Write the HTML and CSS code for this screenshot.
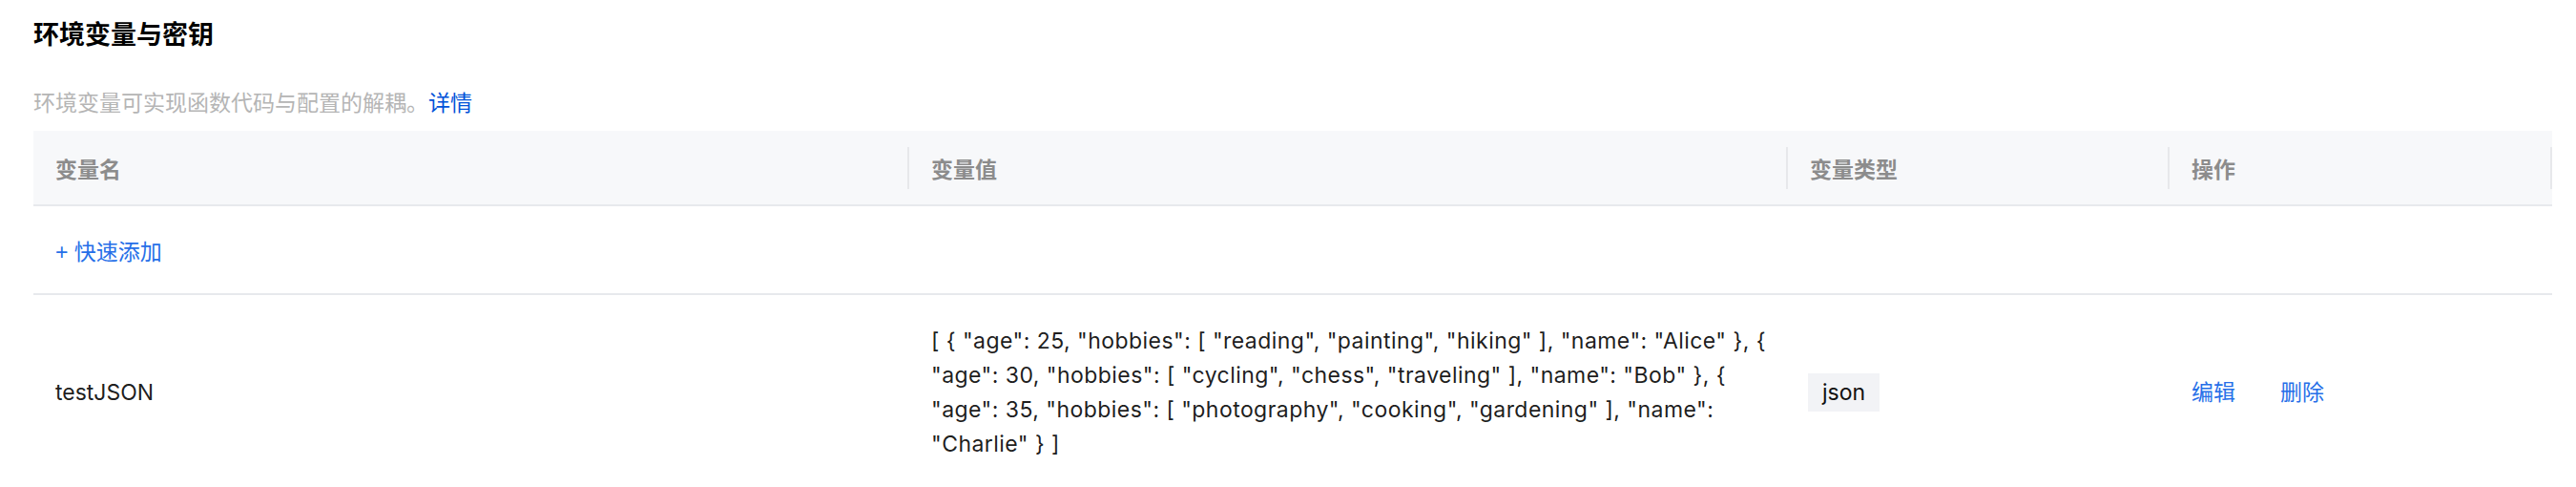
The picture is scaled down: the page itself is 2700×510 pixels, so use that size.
FILE: index.html
```html
<!DOCTYPE html>
<html lang="zh-CN">
<head>
<meta charset="utf-8">
<title>环境变量与密钥</title>
<link rel="stylesheet" href="styles.css">
</head>
<body>
<div class="page">
  <h2 class="title">环境变量与密钥</h2>
  <p class="desc">环境变量可实现函数代码与配置的解耦。<a class="detail-link" href="#">详情</a></p>
  <div class="table">
    <div class="row head">
      <div class="th">变量名</div>
      <div class="th">变量值</div>
      <div class="th">变量类型</div>
      <div class="th">操作</div>
    </div>
    <div class="row add-row">
      <a class="link add-link" href="#">+ 快速添加</a>
    </div>
    <div class="row data">
      <div class="td">testJSON</div>
      <div class="td value">[ { "age": 25, "hobbies": [ "reading", "painting", "hiking" ], "name": "Alice" }, { "age": 30, "hobbies": [ "cycling", "chess", "traveling" ], "name": "Bob" }, { "age": 35, "hobbies": [ "photography", "cooking", "gardening" ], "name": "Charlie" } ]</div>
      <div class="td"><span class="tag">json</span></div>
      <div class="td ops"><a class="link" href="#">编辑</a><a class="link" href="#">删除</a></div>
    </div>
  </div>
</div>
</body>
</html>
```

FILE: styles.css
```css
html, body {
  margin: 0;
  padding: 0;
  background: #ffffff;
}

body {
  font-family: "Liberation Sans", "Noto Sans CJK SC", sans-serif;
  color: rgba(0, 0, 0, 0.9);
}

.page {
  padding: 17px 25px 0 35px;
}

.title {
  margin: 0;
  font-size: 27px;
  line-height: 40px;
  font-weight: 700;
  color: #000;
}

.desc {
  margin: 33px 0 11px;
  font-size: 23px;
  line-height: 36px;
  color: #b5b5b5;
}

.detail-link {
  color: #0052d9;
  text-decoration: none;
}

.table {
  display: flex;
  flex-direction: column;
}

.row {
  display: grid;
  grid-template-columns: 918px 921px 400px 401px;
}

.head {
  height: 77px;
  background: #f7f8fa;
  border-bottom: 2px solid #e7e9ed;
  align-items: center;
}

.th {
  position: relative;
  padding: 0 23px;
  font-size: 23px;
  font-weight: 600;
  color: #8c8c8c;
}

.th::after {
  content: "";
  position: absolute;
  right: 0;
  top: 50%;
  width: 2px;
  height: 44px;
  margin-top: -22px;
  background: #e7e8eb;
}

.add-row {
  display: flex;
  align-items: center;
  height: 91px;
  padding: 0 23px;
  border-bottom: 2px solid #e7e9ed;
}

.link {
  color: #266fe8;
  text-decoration: none;
  font-size: 23px;
}

.data {
  align-items: center;
  padding: 30px 0;
}

.td {
  padding: 0 23px;
  font-family: "Inter", "Noto Sans CJK SC", sans-serif;
  font-size: 23px;
  line-height: 36px;
  color: rgba(0, 0, 0, 0.9);
}

.value {
  letter-spacing: 0.45px;
}

.tag {
  display: inline-flex;
  align-items: center;
  height: 40px;
  padding: 0 15px;
  margin-left: -2px;
  background: #f2f3f6;
  color: #111;
}

.ops {
  display: flex;
  gap: 47px;
}
```
